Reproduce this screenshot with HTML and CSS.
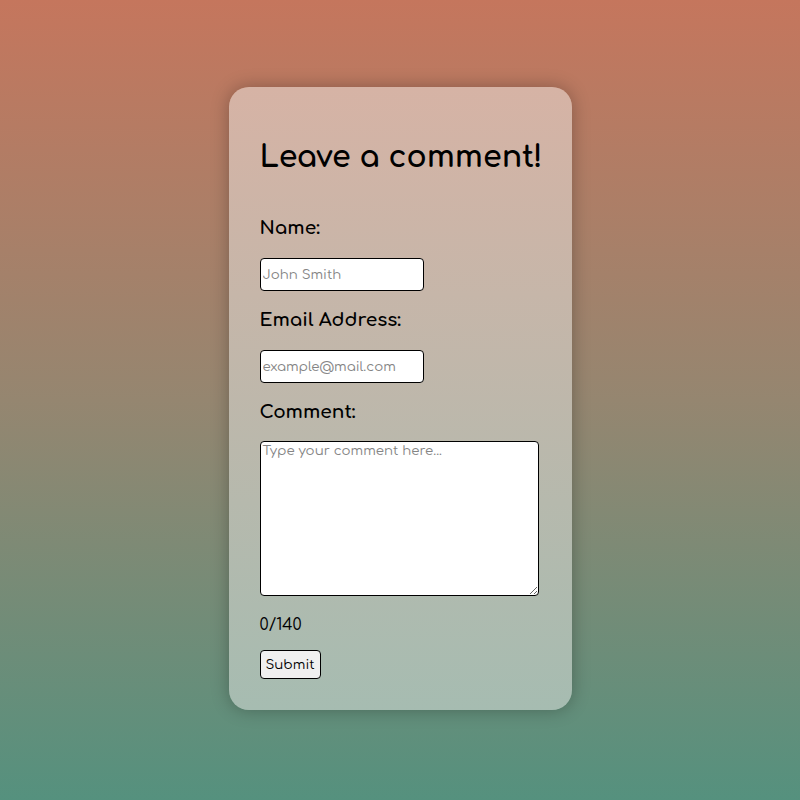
FILE: index.html
```html
<!DOCTYPE html>
<html lang="en">
<head>
<meta charset="utf-8">
<title>Leave a comment</title>
<link rel="stylesheet" href="styles.css">
</head>
<body>
<main class="card">
  <h1 class="title">Leave a comment!</h1>
  <form class="form">
    <label class="label label-first" for="name">Name:</label>
    <input class="field" id="name" type="text" placeholder="John Smith">
    <label class="label" for="email">Email Address:</label>
    <input class="field" id="email" type="email" placeholder="example@mail.com">
    <label class="label" for="comment">Comment:</label>
    <textarea class="area" id="comment" placeholder="Type your comment here..."></textarea>
    <p class="count">0/140</p>
    <div><button class="submit" type="button">Submit</button></div>
  </form>
</main>
</body>
</html>
```
FILE: styles.css
```css
html, body {
  margin: 0;
  height: 100%;
}
body {
  background: linear-gradient(to bottom, #c5765d 0%, #958670 50%, #55917e 100%);
  display: flex;
  align-items: center;
  justify-content: center;
  font-family: "Comfortaa", "Open Sans", sans-serif;
  color: #000;
}
.card {
  box-sizing: border-box;
  width: 343px;
  height: 623px;
  margin-top: -3px;
  padding: 31px 31px 31px 31px;
  border-radius: 20px;
  background: linear-gradient(to bottom, #d6b3a5 0%, #a6bcb1 100%);
  box-shadow: 0 0 18px rgba(0, 0, 0, 0.28);
}
.title {
  margin: 20px 0 0 0;
  font-size: 30px;
  font-weight: 700;
  line-height: 40px;
  white-space: nowrap;
}
.form {
  display: flex;
  flex-direction: column;
  align-items: flex-start;
}
.label {
  margin-top: 18px;
  font-size: 18.5px;
  font-weight: 700;
  line-height: 22px;
}
.label-first {
  margin-top: 39px;
}
.field {
  box-sizing: border-box;
  width: 164px;
  height: 33px;
  margin-top: 19px;
  padding: 0 2px;
  border: 1px solid #000;
  border-radius: 4px;
  background: #fff;
  font-family: inherit;
  font-size: 13.33px;
}
.field::placeholder, .area::placeholder {
  color: #858585;
}
.area {
  box-sizing: border-box;
  width: 279px;
  height: 155px;
  margin-top: 18px;
  padding: 1px 2px;
  border: 1px solid #000;
  border-radius: 4px;
  background: #fff;
  font-family: inherit;
  font-size: 13.33px;
}
.count {
  margin: 19px 0 0 0;
  font-size: 16px;
  line-height: 20px;
}
.submit {
  margin-top: 15px;
  height: 29px;
  padding: 0 5px;
  border: 1px solid #000;
  border-radius: 4px;
  background: #f0f0f0;
  font-family: inherit;
  font-size: 13.33px;
  color: #000;
}
```
